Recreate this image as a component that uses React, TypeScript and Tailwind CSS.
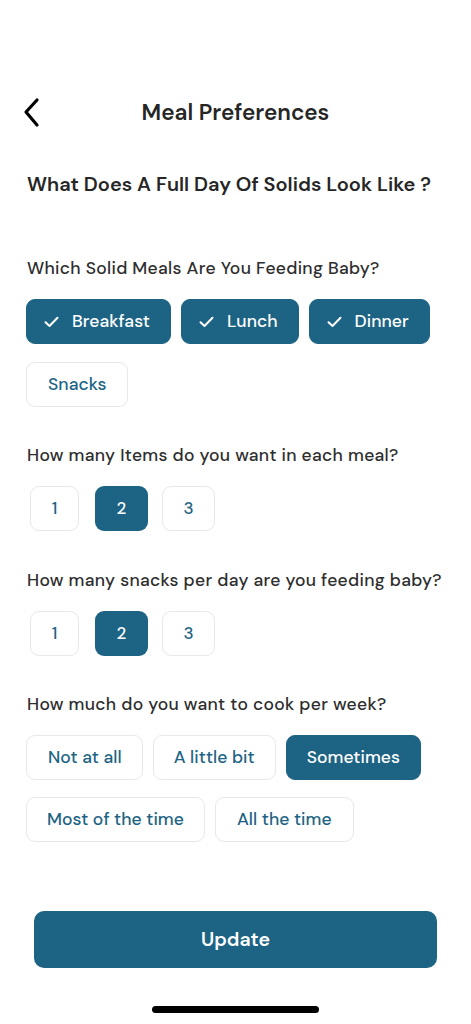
import React from "react";

function Check() {
  return (
    <svg width="15" height="12" viewBox="0 0 15 12" fill="none">
      <path d="M1.5 6.2 L5.5 10 L13.5 1.8" stroke="white" strokeWidth="2" strokeLinecap="round" strokeLinejoin="round" />
    </svg>
  );
}

function Chip({ label, selected, check, className = "" }: { label: string; selected?: boolean; check?: boolean; className?: string }) {
  return (
    <div
      className={
        "h-[45px] rounded-[9px] flex items-center text-[17.5px] tracking-[0.05px] font-medium " +
        (selected
          ? "bg-[#1d6484] text-white border border-[#1d6484] "
          : "bg-white text-[#1d6484] border border-[#e8e8e8] ") +
        className
      }
    >
      {check && <span className="mr-[13px] flex items-center"><Check /></span>}
      {label}
    </div>
  );
}

function Num({ n, selected, className }: { n: string; selected?: boolean; className: string }) {
  return (
    <div
      className={
        "h-[45px] rounded-[9px] flex items-center justify-center text-[17px] font-medium " +
        className +
        " " +
        (selected ? "bg-[#1d6484] text-white" : "bg-white text-[#1d6484] border border-[#e8e8e8]")
      }
    >
      {n}
    </div>
  );
}

const LABEL = "text-[17.5px] font-medium leading-[24px] tracking-[0.3px] text-[#2e2e2e]";

function Nums() {
  return (
    <div className="mt-[19px] flex ml-[3px]">
      <Num n="1" className="w-[49px]" />
      <Num n="2" selected className="w-[53px] ml-[16px]" />
      <Num n="3" className="w-[53px] ml-[14px]" />
    </div>
  );
}

export default function App() {
  return (
    <div
      className="w-[471px] h-[1024px] bg-white relative overflow-hidden text-[#2a2a2a]"
      style={{ fontFamily: '"DM Sans", Inter, "Open Sans", sans-serif' }}
    >
      <div className="pt-[96px] px-[20px] flex items-center h-[129px] relative">
        <svg width="24" height="32" viewBox="0 0 24 32" fill="none" className="ml-[1px]">
          <path d="M16 3 L5 15 L16 28" stroke="black" strokeWidth="3.2" strokeLinecap="round" strokeLinejoin="round" />
        </svg>
        <div className="absolute left-0 right-0 top-[97px] h-[32px] flex items-center justify-center text-[22.5px] font-semibold text-[#262626]">
          Meal Preferences
        </div>
      </div>

      <div className="px-[27px]">
        <div className="mt-[43px] text-[20px] font-semibold text-[#262626] leading-[24px]">
          What Does A Full Day Of Solids Look Like ?
        </div>

        <div className={"mt-[60px] " + LABEL}>Which Solid Meals Are You Feeding Baby?</div>
        <div className="mt-[19px] flex flex-wrap gap-x-[10px] gap-y-[18px] -ml-[1px]">
          <Chip label="Breakfast" selected check className="pl-[17px] pr-[20px]" />
          <Chip label="Lunch" selected check className="pl-[17px] pr-[20px]" />
          <Chip label="Dinner" selected check className="pl-[17px] pr-[20px]" />
          <Chip label="Snacks" className="px-[21px]" />
        </div>

        <div className={"mt-[36px] " + LABEL}>How many Items do you want in each meal?</div>
        <Nums />

        <div className={"mt-[37px] " + LABEL}>How many snacks per day are you feeding baby?</div>
        <Nums />

        <div className={"mt-[36px] " + LABEL}>How much do you want to cook per week?</div>
        <div className="mt-[19px] flex flex-wrap gap-x-[10px] gap-y-[17px] -ml-[1px]">
          <Chip label="Not at all" className="pl-[21px] pr-[20px]" />
          <Chip label="A little bit" className="px-[20px]" />
          <Chip label="Sometimes" selected className="px-[20px]" />
          <Chip label="Most of the time" className="px-[20px]" />
          <Chip label="All the time" className="px-[21px]" />
        </div>
      </div>

      <div className="absolute left-[34px] right-[34px] top-[911px] h-[57px] rounded-[10px] bg-[#1d6484] flex items-center justify-center text-white text-[19.5px] font-semibold">
        Update
      </div>
      <div className="absolute left-[152px] w-[167px] top-[1006px] h-[7px] rounded-full bg-black" />
    </div>
  );
}
